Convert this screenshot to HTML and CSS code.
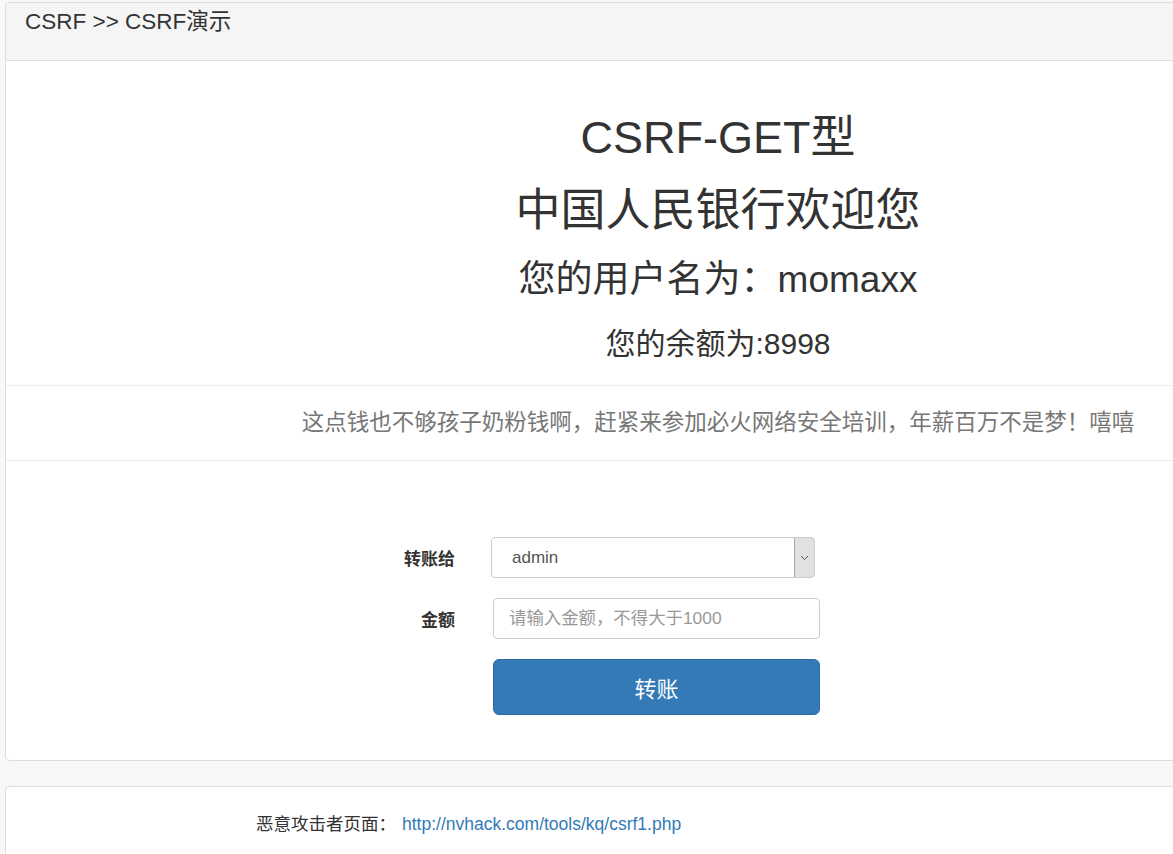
FILE: index.html
```html
<!DOCTYPE html>
<html lang="zh-CN">
<head>
<meta charset="utf-8">
<title>CSRF演示</title>
<link rel="stylesheet" href="styles.css">
</head>
<body>
<div class="page">
  <div class="panel">
    <div class="panel-heading">CSRF &gt;&gt; CSRF演示</div>
    <div class="intro">
      <div class="line l1">CSRF-GET型</div>
      <div class="line l2">中国人民银行欢迎您</div>
      <div class="line l3">您的用户名为：momaxx</div>
      <div class="line l4">您的余额为:8998</div>
    </div>
    <div class="notice">这点钱也不够孩子奶粉钱啊，赶紧来参加必火网络安全培训，年薪百万不是梦！嘻嘻</div>
    <form class="form">
      <label class="label">转账给</label>
      <div class="field">
        <div class="select">
          <span class="select-value">admin</span>
          <span class="select-arrow">
            <svg width="9" height="6" viewBox="0 0 9 6"><path d="M1 1 L4.5 4.5 L8 1" fill="none" stroke="#555" stroke-width="1"/></svg>
          </span>
        </div>
      </div>
      <label class="label">金额</label>
      <div class="field">
        <input class="input" type="text" placeholder="请输入金额，不得大于1000">
      </div>
      <div></div>
      <div class="field">
        <button class="btn" type="button">转账</button>
      </div>
    </form>
  </div>
  <div class="panel panel-foot">
    <span class="foot-label">恶意攻击者页面：</span><a class="foot-link" href="#">http://nvhack.com/tools/kq/csrf1.php</a>
  </div>
</div>
</body>
</html>
```

FILE: styles.css
```css
html, body {
  margin: 0;
  padding: 0;
  overflow: hidden;
  background: #f8f8f8;
}
body {
  font-family: "Liberation Sans", "Noto Sans CJK SC", sans-serif;
  color: #333;
}
.page {
  width: 1426px;
  padding: 2px 0 0 5px;
}
.panel {
  background: #fff;
  border: 1px solid #ddd;
  border-radius: 4px;
  box-sizing: border-box;
  width: 1426px;
}
.panel-heading {
  height: 58px;
  box-sizing: border-box;
  background: #f5f5f5;
  border-bottom: 1px solid #ddd;
  border-radius: 4px 4px 0 0;
  padding: 6px 0 0 19px;
  font-size: 22.5px;
  line-height: 26px;
  white-space: nowrap;
}
.intro {
  padding: 40px 0 10px;
  text-align: center;
  border-bottom: 1px solid #eee;
}
.line {
  white-space: nowrap;
}
.l1 { font-size: 45px; height: 73px; line-height: 73px; }
.l2 { font-size: 45px; height: 74px; line-height: 74px; }
.l3 { font-size: 37px; height: 64px; line-height: 64px; }
.l4 { font-size: 30px; height: 63px; line-height: 63px; }
.notice {
  height: 74px;
  line-height: 74px;
  text-align: center;
  font-size: 22.5px;
  color: #777;
  border-bottom: 1px solid #eee;
  white-space: nowrap;
}
.form {
  display: grid;
  grid-template-columns: 449px 327px;
  column-gap: 38px;
  row-gap: 20px;
  padding: 76px 0 45px;
  align-items: center;
}
.label {
  text-align: right;
  font-weight: bold;
  font-size: 17px;
  color: #333;
}
.field {
  display: flex;
}
.select {
  margin-left: -2px;
  width: 324px;
  height: 41px;
  box-sizing: border-box;
  border: 1px solid #ccc;
  border-radius: 4px;
  display: flex;
  align-items: center;
  justify-content: space-between;
  overflow: hidden;
}
.select-value {
  padding-left: 20px;
  font-size: 17px;
  color: #555;
}
.select-arrow {
  width: 21px;
  height: 41px;
  box-sizing: border-box;
  border: 1px solid #a9a9a9;
  border-radius: 0 4px 4px 0;
  margin: -1px -1px -1px 0;
  background: #e1e1e1;
  display: flex;
  align-items: center;
  justify-content: center;
}
.input {
  width: 327px;
  height: 41px;
  box-sizing: border-box;
  border: 1px solid #ccc;
  border-radius: 4px;
  padding: 0 15px;
  font-family: "Liberation Sans", "Noto Sans CJK SC", sans-serif;
  font-size: 17.4px;
  color: #555;
  outline: none;
}
.input::placeholder {
  color: #999;
}
.btn {
  width: 327px;
  height: 56px;
  box-sizing: border-box;
  background: #337ab7;
  border: 1px solid #2e6da4;
  border-radius: 6px;
  color: #fff;
  font-family: "Liberation Sans", "Noto Sans CJK SC", sans-serif;
  font-size: 22px;
  cursor: pointer;
}
.panel-foot {
  margin-top: 25px;
  height: 80px;
  padding: 25px 0 0 250px;
  line-height: 24px;
  font-size: 17.5px;
  white-space: nowrap;
}
.foot-link {
  margin-left: 6px;
  color: #337ab7;
  text-decoration: none;
  font-size: 17.5px;
}
```
